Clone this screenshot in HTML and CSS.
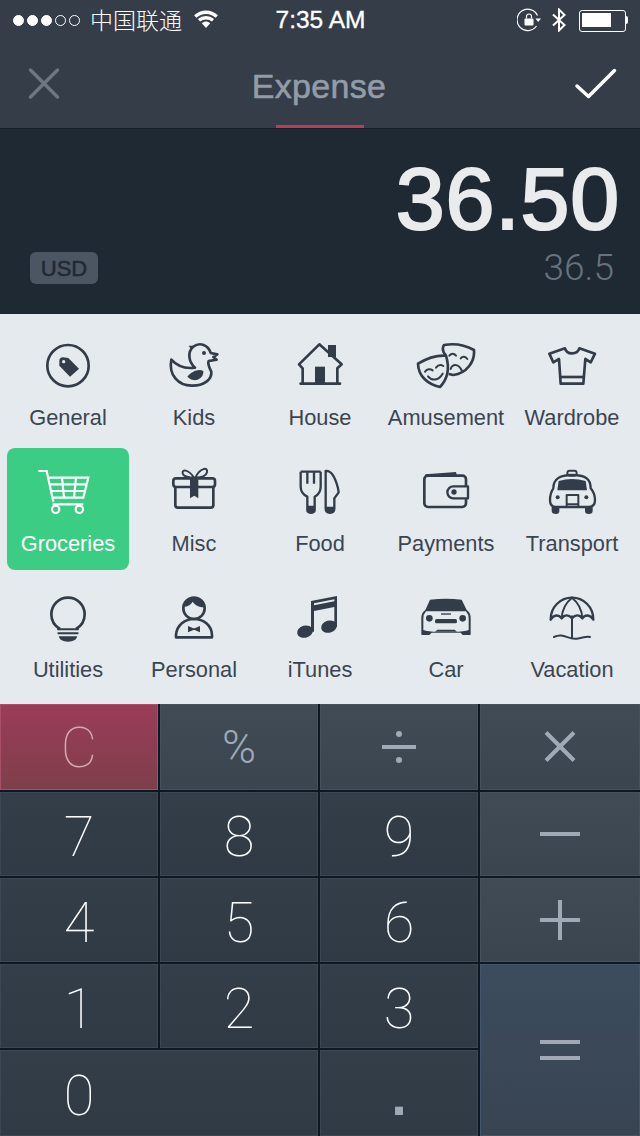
FILE: index.html
```html
<!DOCTYPE html>
<html lang="en">
<head>
<meta charset="utf-8">
<title>Expense</title>
<link rel="stylesheet" href="styles.css">
</head>
<body>
<div class="app">
  <header class="top">
    <div class="status">
      <div class="status-left">
        <span class="signal"><i class="dot on"></i><i class="dot on"></i><i class="dot on"></i><i class="dot"></i><i class="dot"></i></span>
        <span class="carrier">中国联通</span>
        <svg class="wifi" viewBox="0 0 24 18"><path class="wifi-arc" d="M1.200 6.500C7.500 .8 16.500 .8 22.800 6.500M5 10.300C9 6.800 15 6.800 19 10.300"/><path class="wifi-fill" d="M7.800 13.300C10.500 11 13.500 11 16.200 13.300L12 18Z"/></svg>
      </div>
      <div class="time">7:35 AM</div>
      <div class="status-right">
        <svg class="rotlock" viewBox="0 0 24 24"><path class="thin" d="M20.500 7.500A10.700 10.700 0 1 0 19.500 18"/><path class="fill-w" d="M18.500 10.500H24L21.200 14Z"/><rect class="fill-w" x="7.500" y="10.500" width="9" height="7" rx="1"/><path class="thin" d="M9.500 10.500V8.500A2.500 2.500 0 0 1 14.500 8.500V10.500"/></svg>
        <svg class="bt" viewBox="0 0 16 24"><path class="bt-line" d="M2 6.500L13.500 17L8 22.500V1.500L13.500 7L2 17.500"/></svg>
        <span class="battery"><span class="battery-level"></span></span>
      </div>
    </div>
    <nav class="nav">
      <svg class="nav-icon" viewBox="0 0 40 40"><path class="close-x" d="M6.500 7L33.500 34M33.500 7L6.500 34"/></svg>
      <h1 class="title">Expense</h1>
      <svg class="nav-icon" viewBox="0 0 44 40"><path class="check" d="M3 23L14.500 33.500L40.500 7.500"/></svg>
    </nav>
  </header>

  <section class="display">
    <div class="amount">36.50</div>
    <div class="display-row">
      <span class="currency">USD</span>
      <span class="raw">36.5</span>
    </div>
  </section>

  <section class="cats">
    <div class="cat">
      <svg class="ico" viewBox="114 33 180 180"><circle class="s" cx="204" cy="122" r="62"/><path class="f" d="M178 108Q178 97 189 97L205 99L237 131L210 155L178 122Z"/><circle class="hole" cx="191" cy="110" r="5"/></svg>
      <span class="cat-label">General</span>
    </div>
    <div class="cat">
      <svg class="ico" viewBox="492 33 180 180"><path class="s" d="M514 104C530 122 555 132 585 128C565 110 562 80 580 65C600 50 625 60 632 84L652 88L640 96L650 104L626 108C622 118 628 128 634 140C636 165 610 183 575 182C535 182 505 150 514 104Z"/><path class="f" d="M562 155C575 140 595 130 610 138C612 155 595 168 580 165C570 163 565 158 562 155Z"/><path class="f" d="M566 62L578 62L574 74Z"/><circle class="f" cx="612" cy="84" r="6"/></svg>
      <span class="cat-label">Kids</span>
    </div>
    <div class="cat">
      <svg class="ico" viewBox="870 33 180 180"><path class="s" d="M908 175V130L897 118L958 58L1025 118L1012 130V175"/><rect class="f" x="984" y="60" width="24" height="36"/><path class="s round" d="M902 176H1020"/><rect class="f" x="945" y="125" width="30" height="52"/></svg>
      <span class="cat-label">House</span>
    </div>
    <div class="cat">
      <svg class="ico" viewBox="288 33 180 180"><path class="s" d="M378 92C366 78 368 66 372 60C400 55 435 60 462 75C465 110 440 145 400 150L386 147"/><path class="s" d="M294 116C320 100 350 90 378 92C388 125 385 160 360 186C325 178 295 155 294 116Z"/><path class="s6" d="M315 140C320 132 330 130 338 136M348 128C354 120 362 118 370 123M324 154C335 168 355 168 368 146"/><path class="s6" d="M388 92C394 84 402 84 408 92M422 100C428 92 436 94 442 102M392 132C396 118 414 112 426 138"/></svg>
      <span class="cat-label">Amusement</span>
    </div>
    <div class="cat">
      <svg class="ico" viewBox="666 33 180 180"><path class="s" d="M688 86L735 70C740 90 772 90 778 70L825 86L812 112L796 102L790 176H722L717 102L700 112Z"/><path class="s" d="M720 156H792"/></svg>
      <span class="cat-label">Wardrobe</span>
    </div>

    <div class="cat cat-active">
      <svg class="ico" viewBox="114 51 180 180"><path class="w" d="M115 78H140L160 170M158 178H250M146 98H265L250 158H158M151 118H260M156 138H255M186 98L192 158M228 98L222 158"/><circle class="w" cx="167" cy="193" r="11"/><circle class="w" cx="238" cy="193" r="11"/></svg>
      <span class="cat-label">Groceries</span>
    </div>
    <div class="cat">
      <svg class="ico" viewBox="492 51 180 180"><rect class="s" x="520" y="100" width="125" height="26" rx="8"/><path class="s" d="M526 126V180Q526 188 534 188H632Q640 188 640 180V126"/><path class="s6" d="M582 98C565 72 545 72 548 85C550 95 570 98 582 98ZM586 98C600 68 625 65 621 82C618 95 600 98 586 98Z"/><path class="f" d="M570 98H595V160L583 152L570 160Z"/></svg>
      <span class="cat-label">Misc</span>
    </div>
    <div class="cat">
      <svg class="ico" viewBox="870 51 180 180"><path class="s7" d="M902 80V125Q902 145 922 155V195Q922 203 933 203Q944 203 944 195V155Q962 145 962 125V80M922 80V116M942 80V116M902 80H962"/><path class="f" d="M922 182H944V195Q944 206 933 206Q922 206 922 195Z"/><path class="s7" d="M977 78Q1000 75 1014 130L1016 142L1003 160V190Q1003 203 990 203Q977 203 977 190Z"/><path class="f" d="M977 185H1003V192Q1003 206 990 206Q977 206 977 192Z"/></svg>
      <span class="cat-label">Food</span>
    </div>
    <div class="cat">
      <svg class="ico" viewBox="288 51 180 180"><rect class="s" x="313" y="92" width="125" height="94" rx="11"/><path class="f" d="M316 88L408 81L412 96H316Z"/><path class="s7 hole-fill" d="M444 124H400A17.500 17.500 0 0 0 400 160H444Z"/><circle class="f" cx="402" cy="141" r="8"/></svg>
      <span class="cat-label">Payments</span>
    </div>
    <div class="cat">
      <svg class="ico" viewBox="666 51 180 180"><rect class="s6" x="742" y="77" width="28" height="15" rx="7"/><path class="s7" d="M700 130C700 100 720 90 756 90C795 90 812 100 812 130Q825 145 825 165Q825 186 805 186H708Q690 186 690 165Q690 145 700 130Z"/><path class="f" d="M716 108Q756 96 797 108L801 136H712Z"/><circle class="f" cx="713" cy="157" r="6"/><circle class="f" cx="799" cy="157" r="6"/><path class="s6" d="M740 186V150H775V186M740 178H775"/><path class="f" d="M695 186H718V198Q718 207 708 207Q695 207 695 198ZM795 186H818V198Q818 207 806 207Q795 207 795 198Z"/></svg>
      <span class="cat-label">Transport</span>
    </div>

    <div class="cat">
      <svg class="ico" viewBox="114 39 180 180"><path class="s" d="M180 162C162 152 154 136 154 118A50 50 0 0 1 254 118C254 136 246 152 228 162"/><path class="s6" d="M174 163H234M175 175H233"/><path class="f" d="M176 184H232Q228 200 204 200Q180 200 176 184Z"/></svg>
      <span class="cat-label">Utilities</span>
    </div>
    <div class="cat">
      <svg class="ico" viewBox="492 39 180 180"><circle class="s" cx="582" cy="100" r="32"/><path class="f" d="M552 95C552 75 565 67 582 67C600 67 614 80 614 97C595 97 585 90 578 80C572 90 562 95 552 95Z"/><path class="s" d="M528 187V180C530 150 555 132 582 132C610 132 635 150 636 180V187Z"/><path class="f" d="M564 153L580 160H584L600 153V172L584 165H580L564 172Z"/></svg>
      <span class="cat-label">Personal</span>
    </div>
    <div class="cat">
      <svg class="ico" viewBox="870 39 180 180"><ellipse class="f" cx="915" cy="170" rx="24" ry="18" transform="rotate(-15 915 170)"/><ellipse class="f" cx="987" cy="155" rx="24" ry="18" transform="rotate(-15 987 155)"/><path class="f" d="M933 78L1011 63V155H1003V96L942 108V170H933ZM942 91L1003 79V73L942 85Z"/></svg>
      <span class="cat-label">iTunes</span>
    </div>
    <div class="cat">
      <svg class="ico" viewBox="288 39 180 180"><path class="f" d="M330 74Q378 69 425 74L440 105Q452 112 452 130V178Q452 180 450 180H428L422 173H335L328 180H306Q304 180 304 178V130Q304 112 316 105Z"/><path class="hole" d="M318 109H438Q446 118 446 130V165Q430 172 378 170Q325 172 310 165V130Q310 118 318 109Z"/><circle class="f" cx="328" cy="130" r="10"/><circle class="f" cx="428" cy="130" r="10"/><rect class="f" x="345" y="132" width="66" height="13" rx="5"/><rect class="f" x="363" y="115" width="30" height="4"/><path class="f" d="M345 170L352 164H404L411 170Z"/></svg>
      <span class="cat-label">Car</span>
    </div>
    <div class="cat">
      <svg class="ico" viewBox="666 39 180 180"><path class="s7" d="M692 134C692 95 722 68 756 68C790 68 820 95 820 134C810 118 796 118 787 130C778 118 766 118 756 130C746 118 734 118 725 130C716 118 702 118 692 134Z"/><path class="s6" d="M756 68C735 85 726 105 725 130M756 68C777 85 786 105 787 130M756 124V190"/><path class="s6" d="M702 186C730 172 745 195 770 191C790 188 800 182 810 186"/></svg>
      <span class="cat-label">Vacation</span>
    </div>
  </section>

  <section class="keys">
    <button class="key key-clear">C</button>
    <button class="key key-op key-txt">%</button>
    <button class="key key-op" aria-label="divide"><svg class="op" viewBox="0 0 40 40"><rect class="op-f" x="3" y="18" width="34" height="4"/><circle class="op-f" cx="20" cy="7" r="3"/><circle class="op-f" cx="20" cy="33" r="3"/></svg></button>
    <button class="key key-op" aria-label="multiply"><svg class="op" viewBox="0 0 40 40"><path class="op-s" d="M6 5.500L34 33.500M34 5.500L6 33.500"/></svg></button>

    <button class="key key-num">7</button>
    <button class="key key-num">8</button>
    <button class="key key-num">9</button>
    <button class="key key-op" aria-label="minus"><svg class="op" viewBox="0 0 40 40"><rect class="op-f" x="0" y="18" width="40" height="4"/></svg></button>

    <button class="key key-num">4</button>
    <button class="key key-num">5</button>
    <button class="key key-num">6</button>
    <button class="key key-op" aria-label="plus"><svg class="op" viewBox="0 0 40 40"><rect class="op-f" x="0" y="18" width="40" height="4"/><rect class="op-f" x="18" y="0" width="4" height="40"/></svg></button>

    <button class="key key-num">1</button>
    <button class="key key-num">2</button>
    <button class="key key-num">3</button>
    <button class="key key-eq" aria-label="equals"><svg class="op" viewBox="0 0 40 40"><rect class="op-f" x="0" y="10" width="40" height="4"/><rect class="op-f" x="0" y="26" width="40" height="4"/></svg></button>

    <button class="key key-num key-zero">0</button>
    <button class="key key-num key-dot">.</button>
  </section>
</div>
</body>
</html>
```

FILE: styles.css
```css
* { box-sizing: border-box; margin: 0; padding: 0; }
html, body { width: 640px; height: 1136px; overflow: hidden; background: #0e1822; }
body { font-family: "Liberation Sans", Arial, sans-serif; }
.app { width: 640px; height: 1136px; display: flex; flex-direction: column; }

/* header */
.top { height: 128px; background: #343d48; position: relative; flex: none; }
.status { height: 40px; display: grid; grid-template-columns: 1fr auto 1fr; align-items: center; padding: 0 12px 0 13px; color: #fff; }
.status-left { display: flex; align-items: center; }
.signal { display: flex; gap: 3px; }
.dot { display: block; width: 11px; height: 11px; border-radius: 50%; border: 1px solid #fff; }
.dot.on { background: #fff; }
.carrier { margin-left: 10px; margin-top: -2px; font: 300 23px/40px "Noto Sans CJK SC", sans-serif; }
.wifi { width: 24px; height: 18px; margin-left: 12px; margin-top: -2px; }
.wifi-arc { fill: none; stroke: #fff; stroke-width: 3.4; }
.wifi-fill { fill: #fff; }
.time { font-size: 24.5px; line-height: 40px; -webkit-text-stroke: .35px #fff; }
.status-right { display: flex; align-items: center; justify-content: flex-end; }
.rotlock { width: 24px; height: 24px; }
.thin { fill: none; stroke: #fff; stroke-width: 1.2; }
.fill-w { fill: #fff; }
.bt { width: 16px; height: 24px; margin-left: 10px; }
.bt-line { fill: none; stroke: #fff; stroke-width: 2; }
.battery { width: 49px; height: 20px; margin-left: 12px; padding: 3px 17px 3px 3px; position: relative; }
.battery::before { content: ""; position: absolute; left: 0; top: 0; width: 45px; height: 20px; border: 1px solid #fff; border-radius: 3px; }
.battery::after { content: ""; position: absolute; right: 0; top: 6px; width: 2px; height: 8px; background: #fff; border-radius: 0 2px 2px 0; }
.battery-level { display: block; height: 100%; background: #fff; }

.nav { height: 88px; display: flex; align-items: center; justify-content: space-between; padding: 0 22px 2px 24px; }
.nav-icon { width: 40px; height: 40px; flex: none; }
.nav-icon:last-child { width: 44px; }
.close-x { fill: none; stroke: #6d7782; stroke-width: 3.5; stroke-linecap: round; }
.check { fill: none; stroke: #fff; stroke-width: 3.5; stroke-linecap: round; stroke-linejoin: round; }
.title { font-size: 34px; font-weight: 400; -webkit-text-stroke: .6px #929ca8; color: #929ca8; line-height: 40px; margin-top: 6px; letter-spacing: .3px; }
.top::after { content: ""; position: absolute; left: 276px; bottom: 0; width: 88px; height: 3px; background: #c23a4f; }

/* display */
.display { height: 186px; flex: none; background: #1f2933; border-top: 1px solid #161e27; padding: 25px 24px 0 30px; display: flex; flex-direction: column; }
.amount { font-size: 88px; font-weight: 400; -webkit-text-stroke: 2.2px #e9ebed; line-height: 90px; color: #e9ebed; text-align: right; margin-right: -4px; letter-spacing: .8px; }
.display-row { display: flex; justify-content: space-between; align-items: center; margin-top: 8px; }
.currency { width: 68px; height: 32px; border-radius: 6px; background: #4b5662; color: #1f2933; font-size: 22px; -webkit-text-stroke: .5px #1f2933; line-height: 33px; text-align: center; }
.raw { font-family: Roboto, "Liberation Sans", sans-serif; font-weight: 300; font-size: 37px; line-height: 32px; color: #68737d; margin-right: 2px; }

/* categories */
.cats { height: 390px; flex: none; background: #e5eaee; padding: 8px 7px; display: grid; grid-template-columns: repeat(5, 122px); grid-auto-rows: 122px; gap: 4px; }
.cat { display: flex; flex-direction: column; align-items: center; padding-top: 14px; border-radius: 8px; color: #3b4551; white-space: nowrap; }
.ico { width: 60px; height: 60px; flex: none; }
.cat-label { font-size: 21.8px; line-height: 26px; margin-top: 9px; }
.cat-active { background: #3ccd85; color: #fff; }
.s, .s6, .s7 { fill: none; stroke: #333d49; stroke-linejoin: round; }
.s { stroke-width: 8; }
.s6 { stroke-width: 6; stroke-linecap: round; }
.s7 { stroke-width: 7; }
.round { stroke-linecap: round; }
.f { fill: #333d49; }
.hole { fill: #e5eaee; }
.s7.hole-fill { fill: #e5eaee; }
.w { fill: none; stroke: #fff; stroke-width: 6.500; }

/* keypad */
.keys { flex: 1; background: #0e1822; display: grid; grid-template-columns: 158px 158px 158px 160px; grid-template-rows: 86px 84px 84px 84px 86px; gap: 2px; }
.key { border: 1px solid #3c4754; background: linear-gradient(#343e49, #303a44); color: #fff; font-family: Roboto, "Liberation Sans", sans-serif; font-weight: 100; font-size: 56px; line-height: 1; display: flex; align-items: center; justify-content: center; }
.key-num { padding-top: 5px; }
.key-op { background: linear-gradient(#404b56, #3b4550); border-color: #46515c; color: #a0a9b5; }
.key-txt { font-size: 46px; font-weight: 300; }
.key-clear { background: linear-gradient(#9b3c59, #7e3f4a); border-color: #a8506a; color: #d2abb5; padding-top: 2px; }
.key-eq { grid-column: 4; grid-row: 4 / span 2; background: linear-gradient(#3c4c5e, #384452); border-color: #43556a; }
.key-zero { grid-column: span 2; padding-right: 160px; }
.key-dot { color: #a0a9b5; font-weight: 700; font-family: "Liberation Sans", sans-serif; }
.op { width: 40px; height: 40px; display: block; }
.op-f { fill: #a0a9b5; }
.op-s { stroke: #a0a9b5; stroke-width: 4; fill: none; }
```
